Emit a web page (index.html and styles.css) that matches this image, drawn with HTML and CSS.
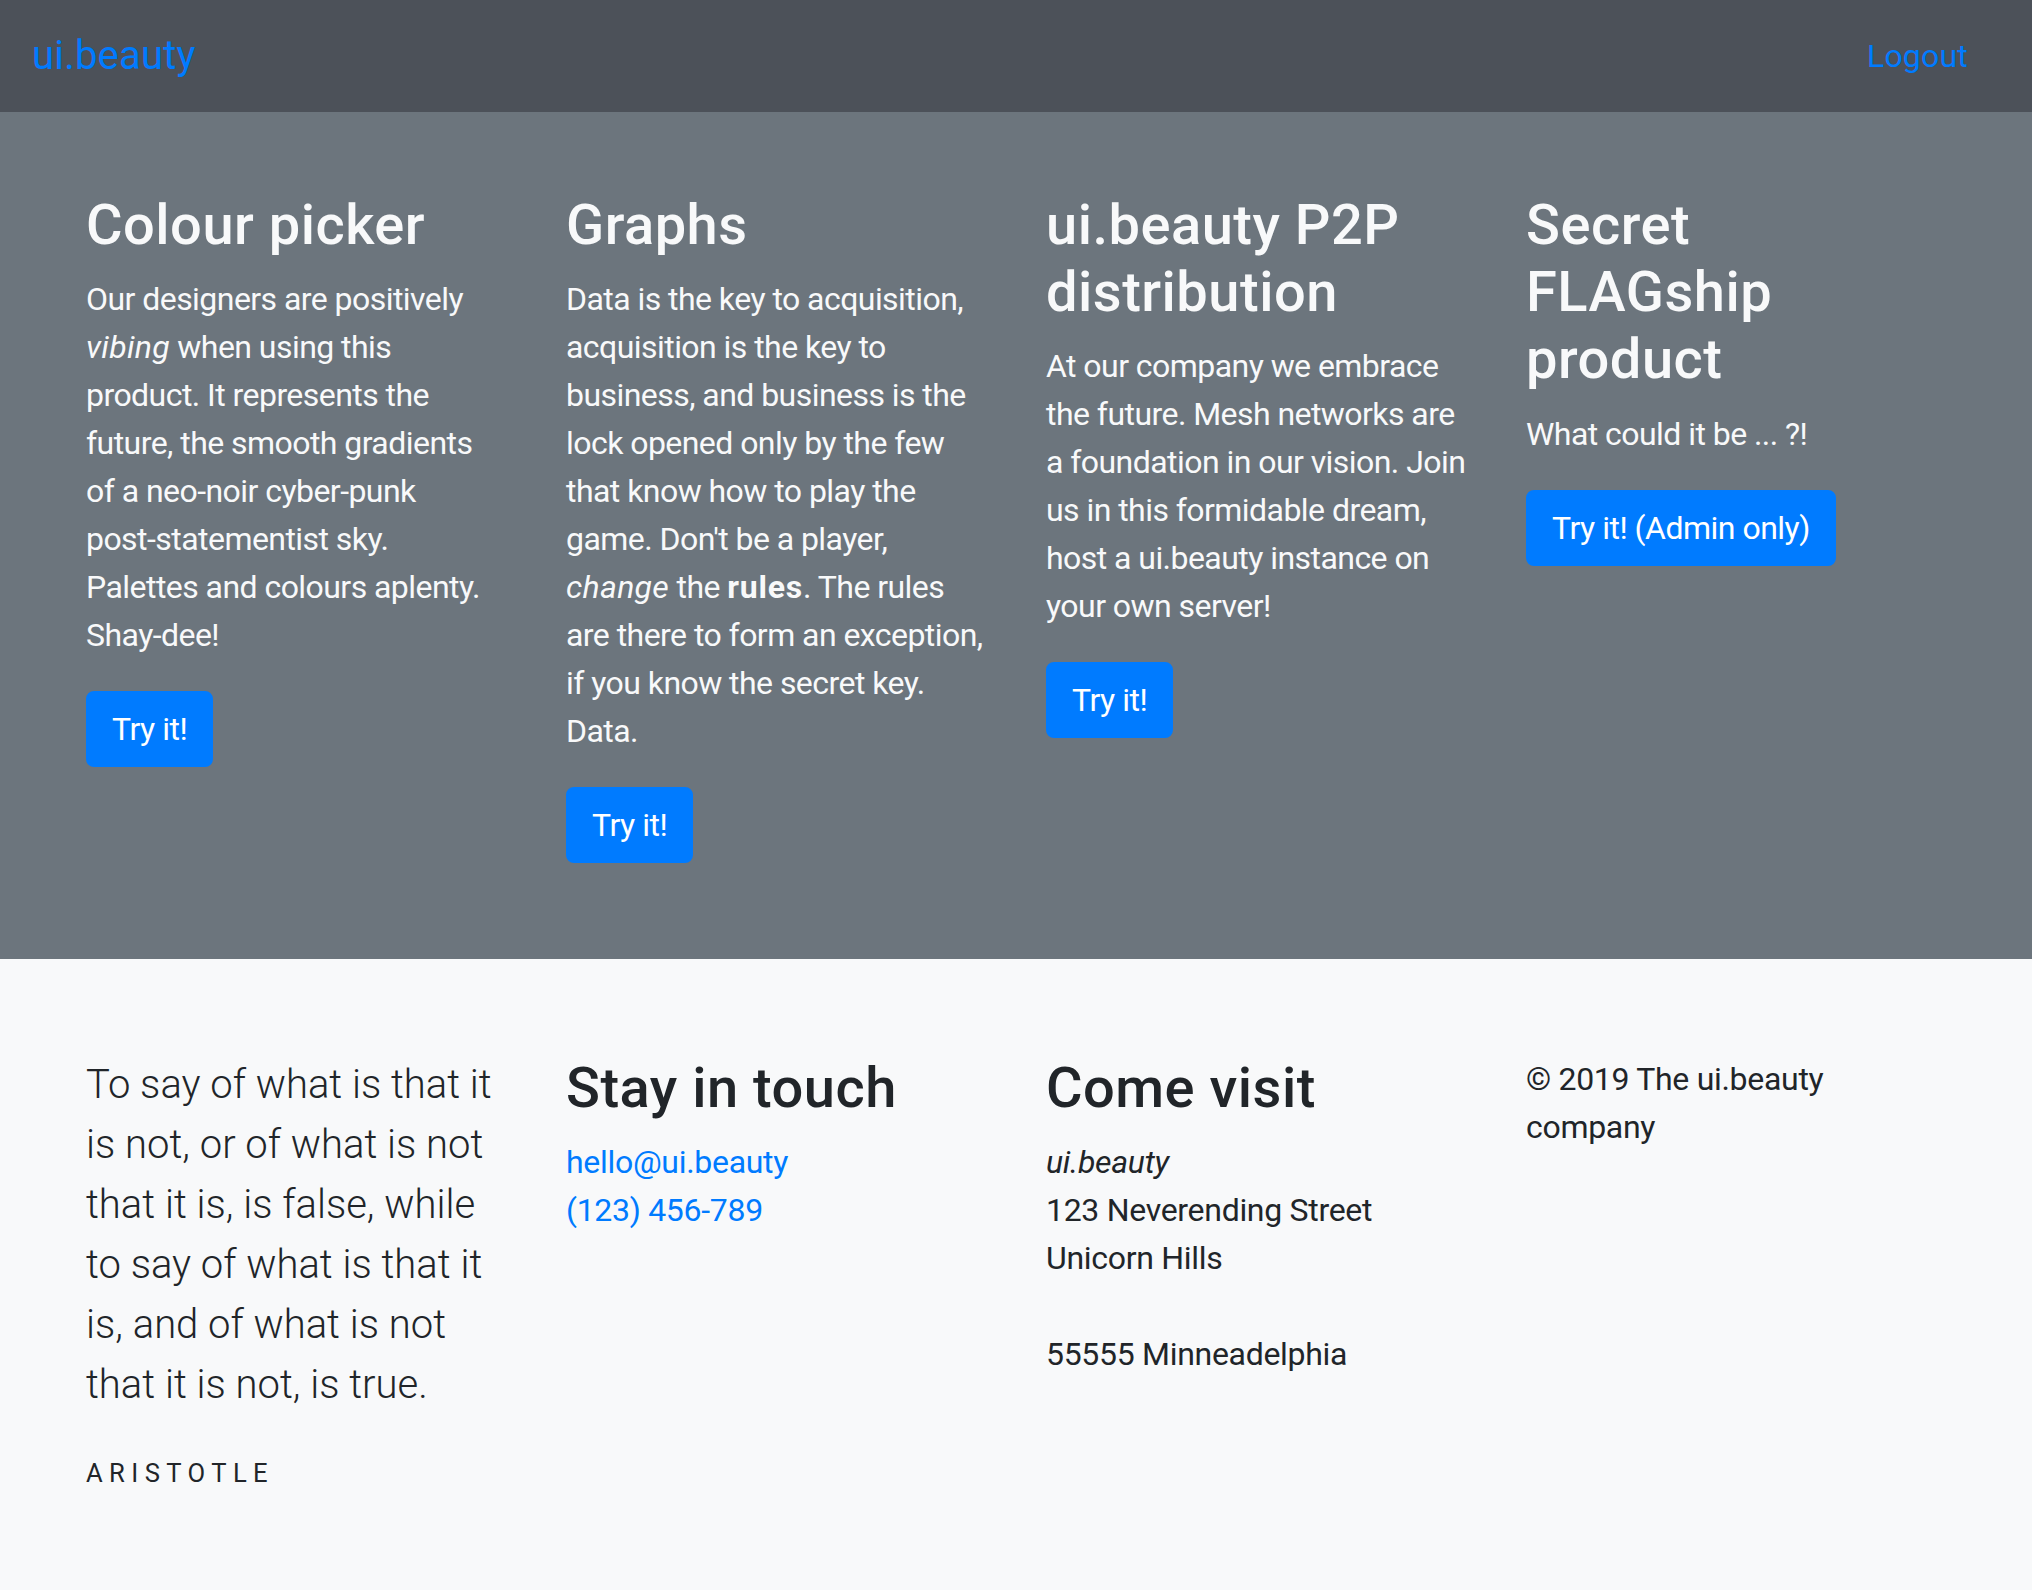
FILE: index.html
```html
<!DOCTYPE html>
<html lang="en">
<head>
<meta charset="utf-8">
<title>ui.beauty</title>
<link rel="stylesheet" href="styles.css">
</head>
<body>
<nav class="navbar">
  <a class="brand" href="#">ui.beauty</a>
  <a class="nav-link" href="#">Logout</a>
</nav>

<section class="products">
  <div class="container">
    <div class="row">
      <div class="col">
        <h3>Colour picker</h3>
        <p>Our designers are positively <em>vibing</em> when using this product. It represents the future, the smooth gradients of a <span class="nowrap">neo-noir</span> <span class="nowrap">cyber-punk</span> <span class="nowrap">post-statementist</span> sky. Palettes and colours aplenty. <span class="nowrap">Shay-dee!</span></p>
        <a class="btn" href="#">Try it!</a>
      </div>
      <div class="col">
        <h3>Graphs</h3>
        <p>Data is the key to acquisition, acquisition is the key to business, and business is the lock opened only by the few that know how to play the game. Don't be a player, <em>change</em> the <strong>rules</strong>. The rules are there to form an exception, if you know the secret key. Data.</p>
        <a class="btn" href="#">Try it!</a>
      </div>
      <div class="col">
        <h3>ui.beauty P2P distribution</h3>
        <p>At our company we embrace the future. Mesh networks are a foundation in our vision. Join us in this formidable dream, host a ui.beauty instance on your own server!</p>
        <a class="btn" href="#">Try it!</a>
      </div>
      <div class="col">
        <h3>Secret FLAGship product</h3>
        <p>What could it be ... ?!</p>
        <a class="btn" href="#">Try it! (Admin only)</a>
      </div>
    </div>
  </div>
</section>

<footer class="footer">
  <div class="container">
    <div class="row">
      <div class="col">
        <p class="lead">To say of what is that it is not, or of what is not that it is, is false, while to say of what is that it is, and of what is not that it is not, is true.</p>
        <p><small class="author">Aristotle</small></p>
      </div>
      <div class="col">
        <h3 class="dark">Stay in touch</h3>
        <p class="info"><a href="#">hello@ui.beauty</a><br><a href="#">(123) 456-789</a></p>
      </div>
      <div class="col">
        <h3 class="dark">Come visit</h3>
        <address class="info"><em>ui.beauty</em><br>123 Neverending Street<br>Unicorn Hills<br><br>55555 Minneadelphia</address>
      </div>
      <div class="col">
        <p class="info">&copy; 2019 The ui.beauty company</p>
      </div>
    </div>
  </div>
</footer>
</body>
</html>
```

FILE: styles.css
```css
* { box-sizing: border-box; }

html, body {
  margin: 0;
  padding: 0;
}

body {
  font-family: Roboto, Inter, "Liberation Sans", sans-serif;
  font-size: 32px;
  line-height: 1.5;
  color: #212529;
  background: #f8f9fa;
}

a {
  color: #007bff;
  text-decoration: none;
}

.nowrap {
  white-space: nowrap;
}

.navbar {
  display: flex;
  align-items: center;
  justify-content: space-between;
  padding: 16px 32px;
  background: #4c5159;
  letter-spacing: 0.2px;
}

.brand {
  font-size: 40px;
  line-height: 60px;
  padding: 10px 0;
}

.nav-link {
  font-size: 32px;
  line-height: 48px;
  padding: 16px;
  margin-right: 16px;
}

.products {
  background: #6c757d;
  color: #f8f9fa;
  padding: 80px 0 96px;
}

.products p {
  letter-spacing: -0.55px;
}

.products em {
  letter-spacing: 0.3px;
}

.products strong {
  font-weight: 700;
  letter-spacing: 0.8px;
}

.footer {
  background: #f8f9fa;
  padding: 96px 0 96px;
}

.container {
  width: 1920px;
  margin: 0 auto;
  padding: 0 30px;
}

.row {
  display: grid;
  grid-template-columns: repeat(4, 1fr);
  margin: 0 -30px;
}

.col {
  padding: 0 30px;
  min-width: 0;
}

h3 {
  font-size: 56px;
  line-height: 1.2;
  font-weight: 500;
  letter-spacing: 0.5px;
  margin: 0 0 16px;
  color: #f8f9fa;
}

h3.dark {
  color: #212529;
}

p {
  margin: 0 0 32px;
}

address {
  font-style: normal;
  margin: 0 0 32px;
}

.info {
  letter-spacing: -0.3px;
}

.btn {
  display: inline-block;
  background: #007bff;
  color: #fff;
  border: 2px solid #007bff;
  border-radius: 8px;
  padding: 12px 24px;
  font-size: 32px;
  line-height: 48px;
  letter-spacing: -0.5px;
}

.lead {
  font-size: 40px;
  line-height: 60px;
  font-weight: 300;
}

.author {
  font-size: 25.6px;
  text-transform: uppercase;
  letter-spacing: 6.4px;
}
```
